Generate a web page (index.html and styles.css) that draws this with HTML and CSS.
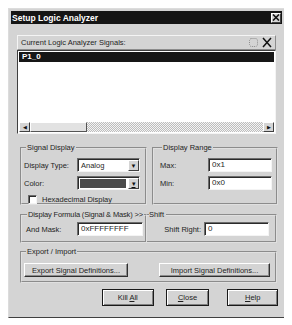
FILE: index.html
```html
<!DOCTYPE html>
<html lang="en">
<head>
    <meta charset="UTF-8">
    <title>Setup Logic Analyzer</title>
    <link rel="stylesheet" href="styles.css">
</head>
<body>
    <div class="window">
        <div class="titlebar">
            <span>Setup Logic Analyzer</span>
            <span class="close-box">
                <svg width="8" height="7" viewBox="0 0 8 7"><path d="M1 0.5 L7 6.5 M7 0.5 L1 6.5" stroke="#111" stroke-width="1.6"/></svg>
            </span>
        </div>
        <div class="content">
            <div class="signals">
                <div class="signals-head">
                    <span>Current Logic Analyzer Signals:</span>
                    <span class="tools">
                        <svg width="11" height="11" viewBox="0 0 11 11"><rect x="1.5" y="1.5" width="8" height="8" rx="2" fill="none" stroke="#8a8a8a" stroke-dasharray="1 1"/></svg>
                        <svg width="12" height="11" viewBox="0 0 12 11"><path d="M2 1 L10 10 M10 1 L2 10" stroke="#111" stroke-width="1.5"/></svg>
                    </span>
                </div>
                <div class="signals-list">
                    <div class="list-row selected">P1_0</div>
                    <div class="hscroll">
                        <span class="sb-btn">&#9664;</span>
                        <span class="sb-thumb"></span>
                        <span class="sb-track"></span>
                        <span class="sb-btn">&#9654;</span>
                    </div>
                </div>
            </div>

            <div class="pair">
                <fieldset class="group signal-display">
                    <legend>Signal Display</legend>
                    <div class="field-row">
                        <span class="lbl w53">Display Type:</span>
                        <span class="combo"><span class="combo-text">Analog</span><span class="combo-btn">&#9660;</span></span>
                    </div>
                    <div class="field-row">
                        <span class="lbl w53">Color:</span>
                        <span class="combo"><span class="swatch"></span><span class="combo-btn pick">&#9662;</span></span>
                    </div>
                    <div class="check-row">
                        <span class="checkbox"></span>
                        <span>Hexadecimal Display</span>
                    </div>
                </fieldset>
                <fieldset class="group display-range">
                    <legend>Display Range</legend>
                    <div class="field-row">
                        <span class="lbl w48">Max:</span>
                        <span class="edit">0x1</span>
                    </div>
                    <div class="field-row">
                        <span class="lbl w48">Min:</span>
                        <span class="edit">0x0</span>
                    </div>
                </fieldset>
            </div>

            <div class="pair tight">
                <fieldset class="group formula">
                    <legend>Display Formula (Signal &amp; Mask) &gt;&gt;</legend>
                    <div class="field-row">
                        <span class="lbl w51">And Mask:</span>
                        <span class="edit mask">0xFFFFFFFF</span>
                    </div>
                </fieldset>
                <fieldset class="group shift">
                    <legend>Shift</legend>
                    <div class="field-row right">
                        <span class="lbl">Shift Right:</span>
                        <span class="edit shift-edit">0</span>
                    </div>
                </fieldset>
            </div>

            <fieldset class="group export">
                <legend>Export / Import</legend>
                <div class="export-row">
                    <button class="btn export-btn">Export Signal Definitions...</button>
                    <button class="btn import-btn">Import Signal Definitions...</button>
                </div>
            </fieldset>

            <div class="actions">
                <button class="btn big kill">Kill <u>A</u>ll</button>
                <button class="btn big close"><u>C</u>lose</button>
                <button class="btn big help"><u>H</u>elp</button>
            </div>
        </div>
    </div>
</body>
</html>
```

FILE: styles.css
```css
body {
    margin: 8px;
    background: #fff;
    font-family: "Liberation Sans", Arial, sans-serif;
    font-size: 7.5px;
    color: #1e1e1e;
}
.window {
    width: 277px;
    height: 310px;
    box-sizing: border-box;
    background: #d4d4d4;
    border: 1px solid;
    border-color: #dcdcdc #404040 #404040 #dcdcdc;
    padding: 2px;
}
.titlebar {
    height: 13px;
    background: #151515;
    color: #fff;
    font-weight: bold;
    font-size: 8.5px;
    display: flex;
    align-items: center;
    justify-content: space-between;
    padding-left: 1px;
}
.close-box {
    width: 10px;
    height: 10px;
    box-sizing: border-box;
    background: #d4d4d4;
    border: 1px solid;
    border-color: #fff #404040 #404040 #fff;
    margin-right: 1px;
    display: flex;
    align-items: center;
    justify-content: center;
}
.content {
    padding: 11px 4px 0 9px;
}
.signals {
    margin: 0 2px 0 -3px;
}
.signals-head {
    height: 15px;
    box-sizing: border-box;
    border: 1px solid;
    border-color: #f4f4f4 #8c8c8c #8c8c8c #f4f4f4;
    display: flex;
    align-items: center;
    justify-content: space-between;
    padding: 0 2px 0 3px;
}
.tools {
    display: flex;
    gap: 2px;
}
.signals-list {
    height: 84px;
    box-sizing: border-box;
    border: 1px solid;
    border-color: #404040 #f4f4f4 #f4f4f4 #404040;
    background: #fff;
    padding: 1px;
    display: flex;
    flex-direction: column;
}
.list-row {
    height: 10px;
    line-height: 10px;
    padding-left: 3px;
    font-weight: bold;
    font-size: 8px;
}
.selected {
    background: #161616;
    color: #fff;
}
.hscroll {
    margin-top: auto;
    height: 10px;
    display: flex;
}
.sb-btn {
    width: 11px;
    box-sizing: border-box;
    background: #d4d4d4;
    border: 1px solid;
    border-color: #fff #404040 #404040 #fff;
    font-size: 5px;
    display: flex;
    align-items: center;
    justify-content: center;
    color: #111;
}
.sb-thumb {
    width: 57px;
    box-sizing: border-box;
    background: #e2e2e2;
    border: 1px solid;
    border-color: #fff #555 #555 #fff;
}
.sb-track {
    flex: 1;
    background: repeating-conic-gradient(#f4f4f4 0 25%, #bdbdbd 0 50%) 0 0 / 2px 2px;
}
.pair {
    display: flex;
    gap: 5px;
    margin-top: 9px;
}
.pair.tight {
    gap: 0;
    margin-top: 5px;
}
.group {
    margin: 0;
    border: 2px groove #e0e0e0;
    padding: 0;
    min-width: 0;
    box-sizing: border-box;
}
.group legend {
    padding: 0 1px;
    margin-left: 2px;
    line-height: 10px;
    height: 10px;
}
.field-row {
    display: flex;
    align-items: center;
    height: 14px;
    margin-bottom: 4px;
}
.field-row.right {
    justify-content: flex-end;
}
.lbl {
    flex: none;
}
.w53 { width: 53px; }
.w48 { width: 48px; }
.w51 { width: 51px; }
.signal-display {
    width: 127px;
    height: 62px;
    padding: 5px 5px 0 2px;
}
.display-range {
    width: 126px;
    height: 62px;
    padding: 5px 4px 0 6px;
}
.combo {
    width: 63px;
    height: 14px;
    box-sizing: border-box;
    background: #fff;
    border: 1px solid;
    border-color: #6c6c6c #f4f4f4 #f4f4f4 #6c6c6c;
    box-shadow: inset 1px 1px #2a2a2a;
    display: flex;
    padding: 1px 0 0 1px;
}
.combo-text {
    flex: 1;
    padding-left: 2px;
    line-height: 11px;
}
.swatch {
    flex: 1;
    margin: 1px 2px 1px 1px;
    background: #4a4a4a;
}
.combo-btn {
    width: 11px;
    box-sizing: border-box;
    background: #d4d4d4;
    border: 1px solid;
    border-color: #fff #404040 #404040 #fff;
    font-size: 6px;
    display: flex;
    align-items: center;
    justify-content: center;
    color: #111;
}
.combo-btn.pick {
    text-decoration: underline;
    font-size: 7px;
}
.check-row {
    display: flex;
    align-items: center;
    gap: 5px;
    padding-left: 4px;
    height: 10px;
}
.checkbox {
    width: 9px;
    height: 9px;
    box-sizing: border-box;
    background: #fff;
    border: 1px solid;
    border-color: #6c6c6c #f4f4f4 #f4f4f4 #6c6c6c;
    box-shadow: inset 1px 1px #2a2a2a;
}
.edit {
    width: 64px;
    height: 14px;
    box-sizing: border-box;
    background: #fff;
    border: 1px solid;
    border-color: #6c6c6c #f4f4f4 #f4f4f4 #6c6c6c;
    box-shadow: inset 1px 1px #2a2a2a;
    padding-left: 3px;
    line-height: 12px;
    font-size: 8px;
}
.edit.mask {
    width: 66px;
}
.edit.shift-edit {
    width: 65px;
    margin-left: 3px;
}
.formula {
    width: 127px;
    height: 33px;
    padding: 2px 0 0 4px;
}
.formula legend {
    white-space: nowrap;
    letter-spacing: -0.15px;
    margin-left: 1px;
}
.shift {
    width: 130px;
    height: 33px;
    padding: 2px 6px 0 0;
    border-left: none;
}
.shift legend {
    margin-left: 2px;
    padding: 0 2px 0 0;
}
.export {
    width: 257px;
    height: 36px;
    margin-top: 4px;
    padding: 6px 0 0 2px;
}
.export-row {
    display: flex;
}
.btn {
    font-family: inherit;
    font-size: 7.5px;
    color: #1e1e1e;
    background: #d4d4d4;
    border: 1px solid;
    border-color: #fff #303030 #303030 #fff;
    box-shadow: inset -1px -1px #8c8c8c;
    padding: 0;
    height: 14px;
}
.export-btn {
    width: 104px;
}
.import-btn {
    width: 111px;
    margin-left: 31px;
}
.actions {
    display: flex;
    margin-top: 6px;
    padding-left: 82px;
}
.btn.big {
    height: 17px;
    border: 1px solid #1a1a1a;
    box-shadow: inset 1px 1px #fff, inset -1px -1px #808080;
}
.kill { width: 54px; }
.close { width: 46px; margin-left: 12px; }
.help { width: 53px; margin-left: 18px; }
```
